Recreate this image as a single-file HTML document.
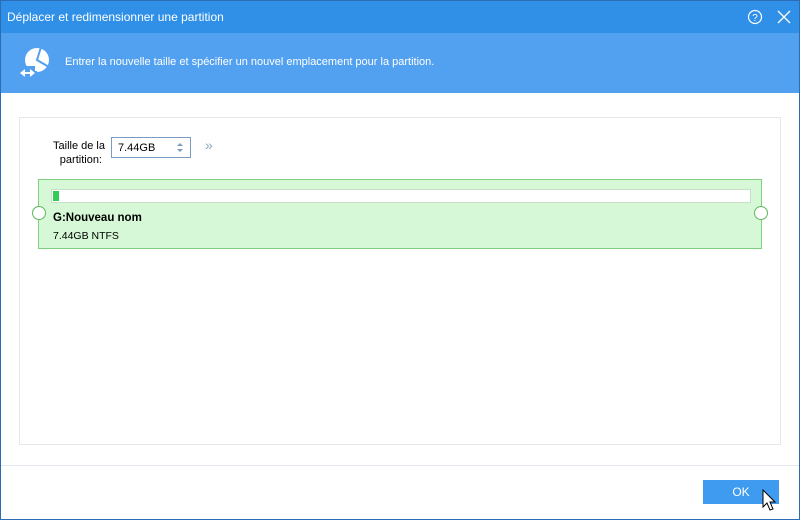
<!DOCTYPE html>
<html><head><meta charset="utf-8"><style>
*{margin:0;padding:0;box-sizing:border-box}
body{width:800px;height:520px;overflow:hidden;font-family:"Liberation Sans",sans-serif;font-size:12px;background:#fff;position:relative}
.win{position:absolute;left:0;top:0;width:800px;height:520px;border:1px solid #2a6db5}
.title{position:absolute;left:0;top:0;width:798px;height:32px;background:#3090e8;color:#fff;font-size:12px;line-height:32px;padding-left:6px}
.banner{position:absolute;left:0;top:32px;width:798px;height:60px;background:#52a0f0;color:#fff;font-size:11px}
.abs{position:absolute}
</style></head><body>
<div class="win">
<div class="title">Déplacer et redimensionner une partition</div>
<svg class="abs" style="left:746px;top:8px" width="16" height="16" viewBox="0 0 16 16"><circle cx="8" cy="8" r="6.5" fill="none" stroke="#fff" stroke-width="1.2"/><text x="8" y="12" font-size="10" fill="#fff" text-anchor="middle" font-family="Liberation Sans">?</text></svg>
<svg class="abs" style="left:776px;top:9px" width="14" height="14" viewBox="0 0 14 14"><path d="M1 1L13 13M13 1L1 13" stroke="#fff" stroke-width="1.3"/></svg>
<div class="banner">
<svg class="abs" style="left:18px;top:12px" width="34" height="34" viewBox="0 0 34 34"><circle cx="18" cy="15" r="12" fill="#fff"/><path d="M22 2L18 15L30 22" stroke="#52a0f0" stroke-width="2" fill="none"/><rect x="0" y="21" width="16" height="13" fill="#52a0f0"/><rect x="14" y="26" width="4" height="8" fill="#52a0f0"/><path d="M3 28H14" stroke="#fff" stroke-width="2"/><path d="M1 28L6 24V32Z M16 28L11 24V32Z" fill="#fff"/></svg>
<div class="abs" style="left:64px;top:23px">Entrer la nouvelle taille et spécifier un nouvel emplacement pour la partition.</div>
</div>
<div class="abs" style="left:18px;top:116px;width:762px;height:328px;border:1px solid #e6e6e6"></div>
<div class="abs" style="left:40px;top:138px;width:64px;text-align:right;line-height:14px;font-size:11px;color:#000">Taille de la<br><span style="padding-right:3px">partition:</span></div>
<div class="abs" style="left:110px;top:136px;width:80px;height:21px;border:1px solid #7a9cc0;padding:4px 6px;font-size:11px">7.44GB</div>
<svg class="abs" style="left:174px;top:139px" width="10" height="15" viewBox="0 0 10 15"><path d="M2 6L5 3L8 6ZM2 9L5 12L8 9Z" fill="#7a9cc0"/></svg>
<div class="abs" style="left:204px;top:136px;color:#8ab;font-size:14px">»</div>
<div class="abs" style="left:37px;top:178px;width:724px;height:70px;background:#d6f8d6;border:1px solid #7fcf7f"></div>
<div class="abs" style="left:50px;top:188px;width:700px;height:14px;background:#fff;border:1px solid #c8e0c8"></div>
<div class="abs" style="left:52px;top:190px;width:6px;height:10px;background:#33cc55"></div>
<div class="abs" style="left:31px;top:205px;width:14px;height:14px;border-radius:50%;background:#fff;border:1px solid #5cb85c"></div>
<div class="abs" style="left:753px;top:205px;width:14px;height:14px;border-radius:50%;background:#fff;border:1px solid #5cb85c"></div>
<div class="abs" style="left:52px;top:211px;font-weight:bold;font-size:11.5px">G:Nouveau nom</div>
<div class="abs" style="left:52px;top:229px;font-size:10.5px">7.44GB NTFS</div>
<div class="abs" style="left:0;top:464px;width:798px;height:1px;background:#e3e8ee"></div>
<div class="abs" style="left:702px;top:479px;width:76px;height:24px;background:#3f9bf0;color:#fff;text-align:center;line-height:24px">OK</div>
<svg class="abs" style="left:761px;top:488px" width="16" height="24" viewBox="0 0 16 24"><path d="M1 1V18L5 14L8 21L11 20L8 13H13Z" fill="#fff" stroke="#000" stroke-width="1"/></svg>
</div>
</body></html>
